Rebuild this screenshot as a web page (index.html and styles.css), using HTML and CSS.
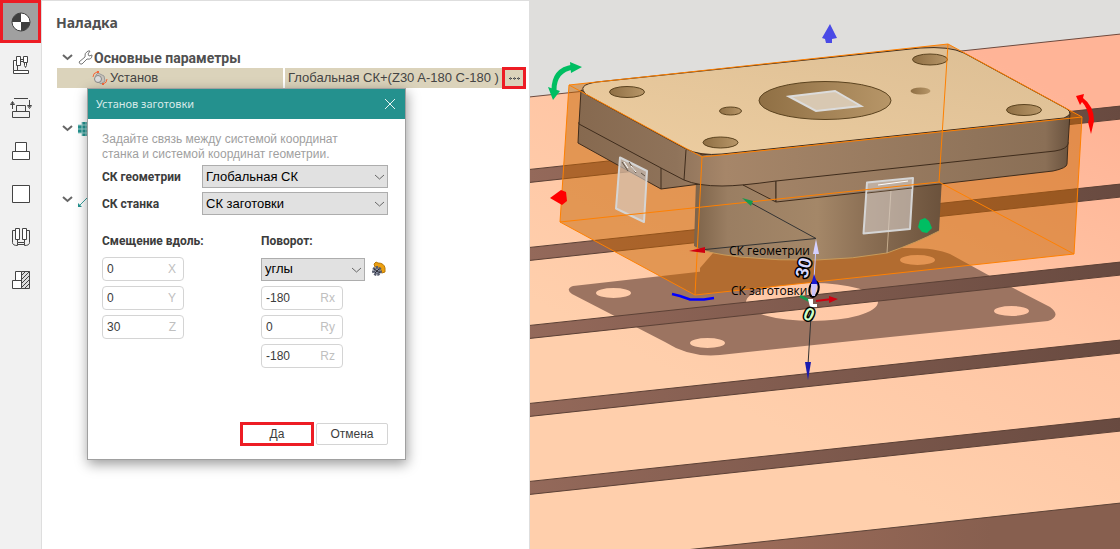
FILE: index.html
```html
<!DOCTYPE html>
<html lang="ru">
<head>
<meta charset="utf-8">
<title>Наладка</title>
<link rel="stylesheet" href="styles.css">
</head>
<body>
<div class="app">
  <nav class="rail" aria-label="Разделы">
    <button class="rail-btn rail-btn-active" aria-label="Наладка">
      <svg width="20" height="20" viewBox="0 0 20 20"><circle cx="10" cy="10" r="9" fill="#fff"/><path d="M10 10V1a9 9 0 0 0-9 9zM10 10v9a9 9 0 0 0 9-9z" fill="#3f3f3f"/><circle cx="10" cy="10" r="9" fill="none" stroke="#3f3f3f"/></svg>
    </button>
    <button class="rail-btn" aria-label="Станок">
      <svg width="18" height="20" viewBox="0 0 18 20" class="ico"><path d="M1.500 18.500h15v-3h-15zM1.500 15.500V5.500h3M5.500 10.500v5M4.500 1.500h4v9h-4zM11.500 1.500h4v6h-4zM8.500 4.500h3M8.500 6.500h3M12.500 7.500v3l1 2 1-2v-3" fill="#fff"/></svg>
    </button>
    <button class="rail-btn" aria-label="Установка">
      <svg width="22" height="20" viewBox="0 0 22 20" class="ico"><path d="M2.500 19.500h17v-6h-17zM6.500 13.500v-6h9v6M4 .500h14M2.500 11V4M.500 6.500l2-3 2 3zM19.500 2v7M17.500 7.500l2 3 2-3z"/></svg>
    </button>
    <button class="rail-btn" aria-label="Деталь">
      <svg width="20" height="20" viewBox="0 0 20 20" class="ico"><path d="M1.500 10.500h17v8h-17zM4.500 10.500v-9h11v9" fill="#fff"/></svg>
    </button>
    <button class="rail-btn" aria-label="Заготовка">
      <svg width="20" height="20" viewBox="0 0 20 20" class="ico"><path d="M1.500 1.500h17v17h-17z" fill="#fff"/></svg>
    </button>
    <button class="rail-btn" aria-label="Приспособление">
      <svg width="20" height="20" viewBox="0 0 20 20" class="ico"><path d="M4.500 3.500h-3v12q0 3 5 3v-3h7v3q5 0 5-3v-12h-3"/><path d="M4.500 1.500h4v11h-4zM11.500 1.500h4v11h-4zM6.500 12.500v3M13.500 12.500v3M6.500 17.500h7" fill="#fff"/></svg>
    </button>
    <button class="rail-btn" aria-label="Сечение">
      <svg width="20" height="20" viewBox="0 0 20 20" class="ico"><path d="M4.500 10.500v-9h6v9M1.500 10.500h9v8h-9z" fill="#fff"/><path d="M10.500 1.500h8v17h-8z" fill="#ddd"/><path d="M10.500 5.500l4-4M10.500 9.500l8-8M10.500 13.500l8-8M10.500 17.500l8-8M13.500 18.500l5-5"/></svg>
    </button>
  </nav>

  <main class="panel">
    <h1 class="panel-title">Наладка</h1>
    <div class="group">
      <svg class="chev" width="11" height="7" viewBox="0 0 11 7"><path d="M1 1l4.500 4L10 1"/></svg>
      <svg width="15" height="15" viewBox="0 0 15 15" fill="#fff" stroke="#777"><path d="M1 12l6-5q-1-4 3-6l2 0-2 3 1 2 3-1q0 5-5 4l-5 5q-2 1-3-2z"/></svg>
      <h2 class="group-title">Основные параметры</h2>
    </div>
    <div class="prop">
      <div class="prop-name">
        <svg width="16" height="15" viewBox="0 0 16 15" fill="none"><path d="M4 4l2-2 6 3 1 5-4 3-5-4z" fill="#c9c4bb" stroke="#999"/><circle cx="6" cy="8" r="3.500" fill="#ddd" stroke="#888"/><path d="M1 6q0-4 4-5M15 8q0 4-4 5" stroke="#f4683c"/><path d="M5 0h2v2H5zM10 12h2v2h-2z" fill="#f4683c"/></svg>
        Установ
      </div>
      <div class="prop-value">Глобальная СК+(Z30 A-180 C-180 )</div>
      <button class="more" aria-label="Изменить"><svg width="11" height="3" viewBox="0 0 11 3" stroke="#444"><path d="M0 1.500h3M4 1.500h3M8 1.500h3"/><path d="M1.500 0v3M5.500 0v3M9.500 0v3" stroke="#777"/></svg></button>
    </div>
    <div class="group group-grid">
      <svg class="chev" width="11" height="7" viewBox="0 0 11 7"><path d="M1 1l4.500 4L10 1"/></svg>
      <svg width="14" height="14" viewBox="0 0 14 14"><path d="M4 0h10v14H4v-3H0V3h4z" fill="#23918e"/><path d="M4 0v14M8 0v14M12 0v14M0 3h14M0 7h14M0 11h14" stroke="#9fd2d0"/></svg>
    </div>
    <div class="group group-link">
      <svg class="chev" width="11" height="7" viewBox="0 0 11 7"><path d="M1 1l4.500 4L10 1"/></svg>
      <svg width="14" height="14" viewBox="0 0 14 14"><path d="M1 13L13 1" stroke="#39a19e"/><path d="M0 10l4 4H0z" fill="#23918e"/></svg>
    </div>

    <section class="dialog" role="dialog" aria-labelledby="dlg-title">
      <header class="dialog-head">
        <h2 class="dialog-title" id="dlg-title">Установ заготовки</h2>
        <button class="close" aria-label="Закрыть"><svg width="12" height="12" viewBox="0 0 12 12"><path d="M1 1l10 10M11 1L1 11" stroke="#e8f4f3"/></svg></button>
      </header>
      <form class="dialog-body">
        <p class="hint">Задайте связь между системой координат<br>станка и системой координат геометрии.</p>
        <div class="pairs">
          <label class="strong" for="geo">СК геометрии</label>
          <div class="drop"><select id="geo"><option>Глобальная СК</option></select><svg class="chev drop-chev" width="11" height="7" viewBox="0 0 11 7"><path d="M1 1l4.500 4L10 1"/></svg></div>
          <label class="strong" for="mach">СК станка</label>
          <div class="drop"><select id="mach"><option>СК заготовки</option></select><svg class="chev drop-chev" width="11" height="7" viewBox="0 0 11 7"><path d="M1 1l4.500 4L10 1"/></svg></div>
        </div>
        <div class="cols">
          <fieldset class="col">
            <legend class="strong">Смещение вдоль:</legend>
            <label class="field"><input value="0"><span>X</span></label>
            <label class="field"><input value="0"><span>Y</span></label>
            <label class="field"><input value="30"><span>Z</span></label>
          </fieldset>
          <fieldset class="col">
            <legend class="strong">Поворот:</legend>
            <div class="rot">
              <div class="drop rot-drop"><select aria-label="Поворот"><option>углы</option></select><svg class="chev drop-chev" width="11" height="7" viewBox="0 0 11 7"><path d="M1 1l4.500 4L10 1"/></svg></div>
              <button type="button" class="gear" aria-label="Настройки"><svg width="15" height="16" viewBox="0 0 15 16"><path d="M3 3l2-2 2 1q6 0 7 5v4l-3 1-2-5-5-1z" fill="#eda010" stroke="#b87808"/><circle cx="6" cy="10" r="3.500" fill="#8d93a5" stroke="#555b6c" stroke-width="3" stroke-dasharray="2 1"/><path d="M3 8l6 4M4 12l4-4" stroke="#2b2d36"/></svg></button>
            </div>
            <label class="field"><input value="-180"><span>Rx</span></label>
            <label class="field"><input value="0"><span>Ry</span></label>
            <label class="field"><input value="-180"><span>Rz</span></label>
          </fieldset>
        </div>
        <div class="actions">
          <button type="button" class="btn btn-yes">Да</button>
          <button type="button" class="btn">Отмена</button>
        </div>
      </form>
    </section>
  </main>

  <svg class="scene" viewBox="530 0 590 549" preserveAspectRatio="xMinYMin slice" role="img" aria-label="Трёхмерный вид заготовки">
    <defs>
      <linearGradient id="table" gradientUnits="userSpaceOnUse" x1="760" y1="420" x2="960" y2="40"><stop offset="0" stop-color="#ffcfac"/><stop offset=".5" stop-color="#ffc5a4"/><stop offset="1" stop-color="#ffb497"/></linearGradient>
      <linearGradient id="groove" x1="0" y1="0" x2="1" y2="0"><stop offset="0" stop-color="#94695a"/><stop offset="1" stop-color="#684a40"/></linearGradient>
      <linearGradient id="edge" x1="0" y1="0" x2="1" y2="0"><stop offset="0" stop-color="#a06e5b"/><stop offset=".7" stop-color="#875f4f"/></linearGradient>
      <linearGradient id="face" x1="0" y1="1" x2="1" y2="0"><stop offset="0" stop-color="#edcda0"/><stop offset="1" stop-color="#dcbe94"/></linearGradient>
      <linearGradient id="side" gradientUnits="userSpaceOnUse" x1="578" y1="0" x2="1070" y2="0"><stop offset="0" stop-color="#86694f"/><stop offset=".2" stop-color="#8f735a"/><stop offset=".3" stop-color="#a68669"/><stop offset=".95" stop-color="#8a6f56"/><stop offset="1" stop-color="#69523e"/></linearGradient>
      <linearGradient id="boss" gradientUnits="userSpaceOnUse" x1="693" y1="0" x2="942" y2="0"><stop offset="0" stop-color="#7c6248"/><stop offset=".14" stop-color="#9a7e62"/><stop offset=".5" stop-color="#a48768"/><stop offset=".7" stop-color="#8b6f54"/><stop offset="1" stop-color="#6b523c"/></linearGradient>
      <linearGradient id="hole" x1="0" y1="0" x2="1" y2="0"><stop offset="0" stop-color="#8f6f44"/><stop offset="1" stop-color="#b79668"/></linearGradient>
    </defs>
    <path fill="#dfdedc" d="M530 0h590v549H530z"/>
    <path fill="url(#table)" stroke="#6e4a3e" d="M529 97L1121 34v516H529z"/>
    <path fill="#9c7461" fill-rule="evenodd" d="M573 286L715 270 900 248Q935 247 950 254L990 276 1050 307Q1062 316 1048 321L890 337 720 355Q690 358 665 342L572 294Q565 289 573 286z
      M596 293a17.500 5 0 1 0 35 0a17.500 5 0 1 0-35 0z M690 343a17.500 5 0 1 0 35 0a17.500 5 0 1 0-35 0z M900 260a17.500 5 0 1 0 35 0a17.500 5 0 1 0-35 0z M994 311a17.500 5 0 1 0 35 0a17.500 5 0 1 0-35 0z M746 302a66 19 0 1 0 132 0a66 19 0 1 0-132 0z"/>
    <path fill="#9c7461" d="M700 268V294L893 274V245H720z"/>
    <g fill="url(#groove)" stroke="#5c4136">
      <path d="M529 169.500L1121 106v13L529 182.500z"/><path d="M529 247.500L1121 184v13L529 260.500z"/><path d="M529 325.500L1121 262v13L529 338.500z"/><path d="M529 403.500L1121 340v13L529 416.500z"/><path d="M529 481.500L1121 418v13L529 494.500z"/>
    </g>
    <path fill="url(#edge)" stroke="#5d4438" d="M690 549.500L820 535.500 1121 503v48H690z"/>
    <path fill="#c86400" fill-opacity=".5" d="M569 85L948 44 1082 117 1074 254 695 295 560 222z"/>

    <g stroke="#3f2c1c" stroke-linejoin="round">
      <path fill="url(#boss)" stroke="none" d="M696 180L694 246Q705 253 740 257 820 265 887 253 918 242 939 231L942 178z"/>
      <path fill="none" stroke="#c99a58" d="M694 247Q705 253 740 257 820 265 887 253 918 242 939 231"/>
      <path fill="none" stroke="#c4ab8c" d="M891 190L887 253"/>
      <path fill="url(#side)" d="M579 122L578 143 661 189 700 184V160z"/>
      <path fill="#9c7c5f" d="M743 185L776 202V176z"/>
      <path fill="url(#side)" d="M776 180V202L940 184 1053 171Q1067 168 1067 164L1068 142z"/>
      <path fill="url(#side)" d="M581 90L579 124 661 168 684 180Q698 186 722 186 740 186 776 181L1055 151Q1067 149 1068 144L1070 113 702 155z"/>
      <path fill="none" d="M686 150L684 180M661 168v21"/>
      <path fill="url(#face)" d="M597 82L920 48Q950 46 964 53L1067 109Q1074 114 1064 118L722 154Q700 156 686 149L587 95Q575 85 597 82z"/>
    </g>
    <g fill="url(#hole)" stroke="#5b431f">
      <ellipse cx="825" cy="100.500" rx="66" ry="19"/>
      <ellipse cx="627" cy="92" rx="17.500" ry="5.500"/><ellipse cx="730.500" cy="111" rx="11" ry="4"/><ellipse cx="720.500" cy="142.500" rx="17.500" ry="5.500"/><ellipse cx="930" cy="59.500" rx="17.500" ry="5.500"/><ellipse cx="1024" cy="110" rx="17.500" ry="5.500"/>
      <ellipse cx="920.500" cy="91" rx="10" ry="3.500" stroke="none"/>
    </g>
    <path fill="#d8c8b2" stroke="#dcdcdc" stroke-width="2" d="M789 96.500L835 91 861 106 816 111z"/>
    <g fill="#d6cdc6" fill-opacity=".62" stroke="#d5d5d5" stroke-width="2" stroke-linejoin="round">
      <path d="M620 157.500L647 171 644 222 616 208.500z"/><path d="M867 182.500L913 178 910 229 863.500 233.500z"/>
    </g>
    <path fill="none" stroke="#5f5244" d="M622 162l6 9M629 162l7 11M641 173l4 3"/>
    <path fill="none" stroke="#fff" stroke-width="1" d="M624 162l4 6M631 166l5 6M878 185l30-4"/>
    <path fill="none" stroke="#59442f" d="M867 193L912 188"/>
    <path fill="none" stroke="#ff8000" stroke-linejoin="round" d="M569 85L948 44 1082 117 702 157zM560 222L939 182 1074 254 695 295zM569 85L560 222M948 44L939 182M1082 117L1074 254M702 157L695 295"/>

    <g fill="#00be62"><path fill="none" stroke="#00be62" stroke-width="5" d="M554 90Q554 70 573 67"/><path d="M570 62L582 67 571 73zM548 87L560 91 553 100z"/><path d="M920 220l5-2 4 3 3 7-5 5-5-1-4-5z"/></g>
    <g fill="#f00"><path d="M550 198L561 190 566 192 567 201 562 205z"/><path d="M1076 96L1084 94 1083 98Q1094 106 1094 121L1091 134 1088 122 1089 119Q1088 108 1082 102L1080 105z"/></g>
    <path fill="#4a4ae6" d="M830 24L837 38 832 39V43H826L825 39 822 38z"/>
    <path fill="none" stroke="#00f" stroke-width="2.500" d="M672 294L680 296 690 299.500H704L714 298"/>

    <path fill="none" stroke="#333" d="M751 203L816 238.500 700 250M812 300L808 365"/>
    <path fill="#d00010" d="M689 251L705 247V253z"/><path fill="#159a4b" d="M742 198L753 201 751 206z"/>
    <path fill="none" stroke="#c8c8ff" stroke-width="1" d="M816 246L813 296"/>
    <path fill="#d4d0ff" d="M816 239L819 254H813z"/>
    <g class="label"><text x="729" y="255">СК геометрии</text><text x="731" y="295">СК заготовки</text></g>
    <ellipse cx="814" cy="289" rx="4.500" ry="8" transform="rotate(12 814 289)" fill="none" stroke="#000" stroke-width="2"/>
    <path fill="#1818d0" d="M814 274L818 285H811z"/><path fill="#c9c5fb" d="M811 284h6l-2 12h-3z"/>
    <path fill="none" stroke="#d00010" stroke-width="2" d="M816 301L832 299"/><path fill="#d00010" d="M829 296L838 299 829 303z"/>
    <path fill="none" stroke="#159a4b" stroke-width="3" d="M800 296L810 301"/>
    <path fill="#fff" d="M808 299h5v5h4v3h-7z"/>
    <path fill="#1a1ab0" d="M805 362H811L808 380z"/>
    <g class="dim"><text x="0" y="0" fill="#d9d9ff" transform="translate(807 279) rotate(-76)">30</text><text x="0" y="0" fill="#ceffc8" transform="translate(802 318) rotate(24)">0</text></g>
  </svg>
</div>
</body>
</html>
```
FILE: styles.css
```css
* { box-sizing: border-box; }
body {
  margin: 0;
  font: 12px/16px "Liberation Sans", Arial, sans-serif;
  color: #3c3c3c;
  background: #fff;
}
button, input, select { font: inherit; color: inherit; }
button { padding: 0; border: 0; background: none; }
svg { flex: none; display: block; }
h1, h2, p { margin: 0; }

.app { display: flex; min-height: 100vh; }

.rail {
  flex: 0 0 42px;
  background: #f1f1f1;
  border-right: 1px solid #dedede;
}
.rail-btn {
  display: flex;
  align-items: center;
  justify-content: center;
  width: 41px;
  height: 43px;
}
.rail-btn-active { border: 3px solid #ed1c24; background: #a0a0a0; }
.ico { fill: none; stroke: #444; }

.panel {
  position: relative;
  flex: 0 0 488px;
  padding: 12px 3px 0 14px;
  border-top: 1px solid #dedede;
  border-right: 1px solid #dedede;
}
.panel-title {
  margin-bottom: 15px;
  font: bold 14px/20px "Noto Sans", sans-serif;
  color: #505050;
}
.group { display: flex; align-items: center; gap: 5px; height: 19px; padding-left: 6px; }
.group-title { margin-left: -4px; font: bold 14px/16px Roboto, sans-serif; color: #505050; }
.chev { fill: none; stroke: #666; stroke-width: 2; }
.group-grid { margin-top: 31px; }
.group-link { margin-top: 52px; }

.prop {
  display: flex;
  align-items: center;
  height: 20px;
  margin: 1px 0 0 1px;
  font-size: 13px;
  color: #444;
  background: #dbd3bb;
}
.prop-name {
  display: flex;
  align-items: center;
  gap: 2px;
  width: 228px;
  height: 20px;
  padding-left: 35px;
  border-right: 2px solid #fff;
}
.prop-value { flex: 1; padding-left: 3px; }
.more {
  display: flex;
  align-items: center;
  justify-content: center;
  width: 24px;
  height: 22px;
  border: 3px solid #ed1c24;
}

.dialog {
  position: absolute;
  top: 87px;
  left: 45px;
  width: 319px;
  background: #fff;
  border: 1px solid #a0a0a0;
  box-shadow: 1px 4px 12px rgba(0, 0, 0, .4);
}
.dialog-head {
  display: flex;
  align-items: center;
  justify-content: space-between;
  height: 30px;
  padding: 0 9px 0 8px;
  background: #24918e;
}
.dialog-title { font: 11px/16px "Noto Sans", sans-serif; color: #d6eae9; }
.dialog-body { padding: 13px 17px 13px 14px; }
.hint { line-height: 15px; color: #a0a0a0; }
.strong { padding: 0; font: bold 12px/16px Roboto, sans-serif; }
.pairs {
  display: grid;
  grid-template-columns: 100px 1fr;
  align-items: center;
  gap: 4px 0;
  margin-top: 3px;
}
.drop { position: relative; }
.drop select {
  display: block;
  width: 100%;
  height: 23px;
  padding: 0 3px;
  font: 13px/16px "Liberation Sans", Arial, sans-serif;
  color: #000;
  background: #e1e1e1;
  border: 1px solid #adadad;
  border-radius: 0;
  appearance: none;
}
.drop-chev { position: absolute; top: 9px; right: 3px; stroke-width: 1; pointer-events: none; }
.cols {
  display: grid;
  grid-template-columns: 159px 1fr;
  margin-top: 18px;
}
.col { display: flex; flex-direction: column; gap: 5px; margin: 0; padding: 0; border: 0; min-width: 0; }
.col legend { margin-bottom: 8px; }
.rot { display: flex; align-items: center; gap: 6px; height: 24px; }
.rot-drop { flex: 0 0 104px; }
.field {
  display: flex;
  align-items: center;
  width: 82px;
  height: 24px;
  padding: 0 7px 0 4px;
  border: 1px solid #d4d4d4;
  border-radius: 4px;
}
.field input { flex: 1; min-width: 0; padding: 0; border: 0; outline: 0; background: none; }
.field span { color: #c0c0c0; }
.actions { display: flex; justify-content: flex-end; align-items: center; gap: 2px; margin-top: 54px; }
.btn { width: 72px; height: 22px; font-size: 12px; border: 1px solid #d4d4d4; border-radius: 2px; }
.btn-yes { width: 74px; height: 24px; border: 3px solid #ed1c24; border-radius: 0; }

.scene { flex: 1; min-width: 0; height: 100vh; }
.label { font: 12px "Open Sans", sans-serif; fill: #000; }
.dim { font: bold 18px "Liberation Sans", sans-serif; stroke: #000; stroke-width: 3; stroke-linejoin: round; paint-order: stroke; }
```
